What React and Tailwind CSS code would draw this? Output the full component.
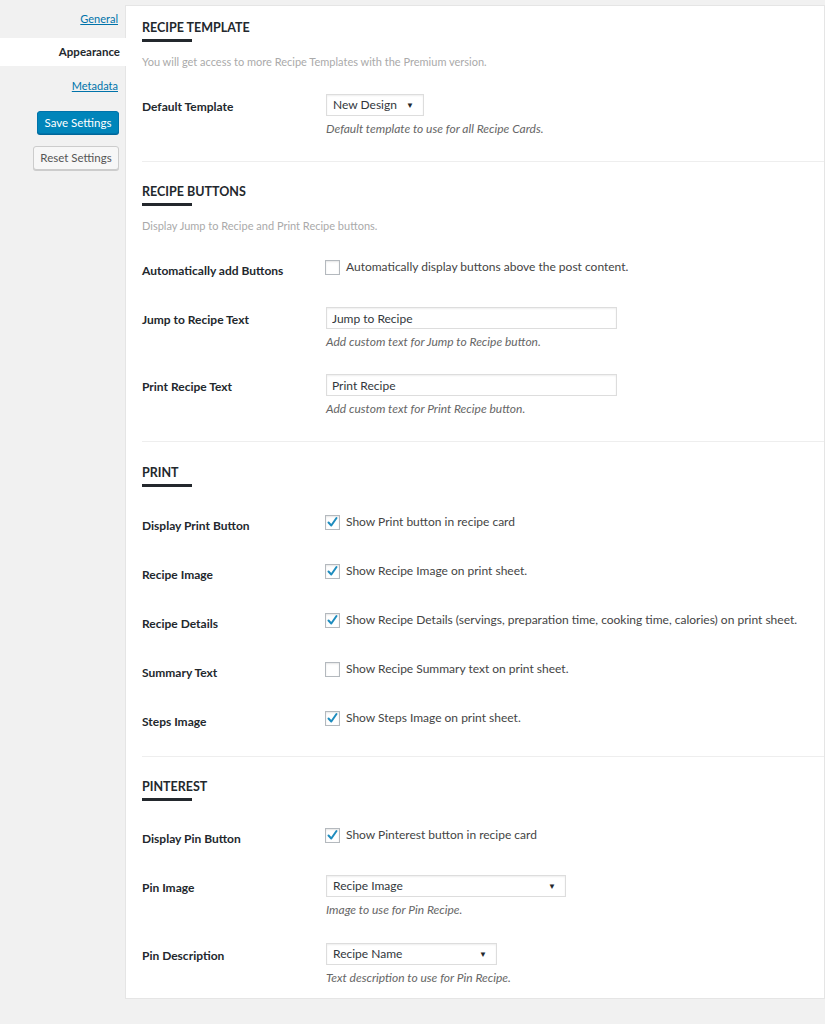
const Heading = ({ title }) => (
  <div>
    <h2 className="pt-[2px] text-[12.5px] font-bold leading-[18px] text-[#23282d]">{title}</h2>
    <div className="mt-[2px] h-[3px] w-[50px] bg-[#23282d]" />
  </div>
);

const Label = ({ children }) => (
  <div className="w-[184px] shrink-0 pt-[4px] text-[12px] font-bold leading-[18px] text-[#23282d]">{children}</div>
);

const Desc = ({ children }) => (
  <p className="mt-1 text-[12px] italic leading-[18px] text-[#666]">{children}</p>
);

const Select = ({ value, width }) => (
  <div
    className="flex h-[22px] items-center justify-between border border-[#ddd] bg-white pl-[6px] pr-[9px] text-[12px] text-[#32373c] shadow-[inset_0_1px_2px_rgba(0,0,0,0.07)]"
    style={{ width }}
  >
    <span>{value}</span>
    <span className="text-[8px] text-[#23282d]">▼</span>
  </div>
);

const TextInput = ({ value }) => (
  <input
    readOnly
    defaultValue={value}
    className="block h-[22px] w-[291px] border border-[#ddd] bg-white px-[5px] text-[12px] text-[#32373c] shadow-[inset_0_1px_2px_rgba(0,0,0,0.07)] outline-none"
  />
);

const Checkbox = ({ checked }) => (
  <span className="-ml-px flex h-[15px] w-[15px] shrink-0 items-center justify-center border border-[#b4b9be] bg-white shadow-[inset_0_1px_2px_rgba(0,0,0,0.1)]">
    {checked && (
      <svg width="13" height="13" viewBox="0 0 13 13">
        <path d="M2.5 6.5 L5.3 9.5 L10.5 2" fill="none" stroke="#1e8cbe" strokeWidth="2" strokeLinecap="round" strokeLinejoin="round" />
      </svg>
    )}
  </span>
);

const CheckRow = ({ label, text, checked, className = "h-[49px]" }) => (
  <div className={`flex ${className}`}>
    <Label>{label}</Label>
    <div className="flex h-[18px] items-center gap-[6px] whitespace-nowrap text-[12px] text-[#444]">
      <Checkbox checked={checked} />
      <span>{text}</span>
    </div>
  </div>
);

const FieldRow = ({ label, children, desc, className = "h-[67px]" }) => (
  <div className={`flex ${className}`}>
    <Label>{label}</Label>
    <div>
      {children}
      <Desc>{desc}</Desc>
    </div>
  </div>
);

const Divider = () => <div className="border-t border-[#eee]" />;

const SectionDesc = ({ children }) => (
  <p className="mt-[11px] text-[11px] leading-[18px] text-[#aaa]">{children}</p>
);

export default function App() {
  return (
    <div className="flex min-h-screen bg-[#f1f1f1] font-['Lato',sans-serif]">
      {/* Sidebar tabs */}
      <aside className="w-[125px] shrink-0 pt-[10px] text-right text-[11px]">
        <a className="block pr-[7px] leading-[18px] text-[#0073aa] underline">General</a>
        <div className="relative z-10 mt-[10px] -mr-px flex h-[28px] items-center justify-end bg-white pr-[6px] text-[11.5px] font-bold text-[#23282d]">
          Appearance
        </div>
        <a className="mt-[11px] block pr-[7px] leading-[18px] text-[#0073aa] underline">Metadata</a>
        <div className="mt-[16px] flex justify-end pr-[6px]">
          <button className="h-[23px] w-[82px] rounded-[3px] border border-[#0073aa] bg-[#0085ba] text-[11.5px] text-white shadow-[0_1px_0_#006799]">
            Save Settings
          </button>
        </div>
        <div className="mt-[12px] flex justify-end pr-[6px]">
          <button className="h-[24px] w-[86px] rounded-[3px] border border-[#ccc] bg-[#f7f7f7] text-[11.5px] text-[#555] shadow-[0_1px_0_#ccc]">
            Reset Settings
          </button>
        </div>
      </aside>

      {/* Settings panel */}
      <main className="mt-[5px] mb-auto flex-1 border border-[#e5e5e5] bg-white pb-[11px] pl-4 pt-[11px]">
        <section>
          <Heading title="RECIPE TEMPLATE" />
          <SectionDesc>You will get access to more Recipe Templates with the Premium version.</SectionDesc>
          <div className="mt-[23px]">
            <FieldRow label="Default Template" desc="Default template to use for all Recipe Cards.">
              <Select value="New Design" width={98} />
            </FieldRow>
          </div>
        </section>

        <Divider />
        <section className="pt-[19px]">
          <Heading title="RECIPE BUTTONS" />
          <SectionDesc>Display Jump to Recipe and Print Recipe buttons.</SectionDesc>
          <div className="mt-[23px]">
            <CheckRow label="Automatically add Buttons" text="Automatically display buttons above the post content." checked={false} />
            <FieldRow label="Jump to Recipe Text" desc="Add custom text for Jump to Recipe button.">
              <TextInput value="Jump to Recipe" />
            </FieldRow>
            <FieldRow label="Print Recipe Text" desc="Add custom text for Print Recipe button.">
              <TextInput value="Print Recipe" />
            </FieldRow>
          </div>
        </section>

        <Divider />
        <section className="pt-[20px]">
          <Heading title="PRINT" />
          <div className="mt-[26px]">
            <CheckRow label="Display Print Button" text="Show Print button in recipe card" checked />
            <CheckRow label="Recipe Image" text="Show Recipe Image on print sheet." checked />
            <CheckRow label="Recipe Details" text="Show Recipe Details (servings, preparation time, cooking time, calories) on print sheet." checked />
            <CheckRow label="Summary Text" text="Show Recipe Summary text on print sheet." checked={false} />
            <CheckRow label="Steps Image" text="Show Steps Image on print sheet." checked className="h-[47px]" />
          </div>
        </section>

        <Divider />
        <section className="pt-[19px]">
          <Heading title="PINTEREST" />
          <div className="mt-[25px]">
            <CheckRow label="Display Pin Button" text="Show Pinterest button in recipe card" checked />
            <FieldRow label="Pin Image" desc="Image to use for Pin Recipe." className="h-[68px]">
              <Select value="Recipe Image" width={240} />
            </FieldRow>
            <FieldRow label="Pin Description" desc="Text description to use for Pin Recipe." className="">
              <Select value="Recipe Name" width={171} />
            </FieldRow>
          </div>
        </section>
      </main>
    </div>
  );
}
